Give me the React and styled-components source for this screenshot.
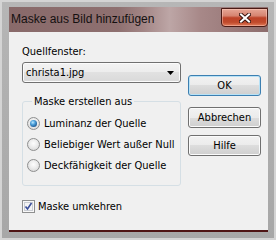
import React from 'react';
import styled, { createGlobalStyle } from 'styled-components';

const Global = createGlobalStyle`
  html, body { margin: 0; padding: 0; background: #d3d3d3; }
  body { font-family: "DejaVu Sans Condensed", "Liberation Sans", sans-serif; }
  * { box-sizing: border-box; }
`;

const Screen = styled.div`
  width: 276px;
  height: 240px;
  padding: 2px;
  background: #d4d4d4;
  display: flex;
`;

const Frame = styled.div`
  flex: 1;
  display: flex;
  flex-direction: column;
  padding: 5px 6px 6px 7px;
  background: linear-gradient(#b6b6b6, #a7a7a7);
`;

const TitleBar = styled.div`
  height: 25px;
  display: flex;
  align-items: flex-start;
  background: linear-gradient(90deg, #896a6a 0%, #8e7070 42%, #a38686 52%, #bda6a6 62%, #a78888 74%, #8d6d6d 100%);
`;

const Title = styled.span`
  flex: 1;
  padding: 5px 0 0 2px;
  font: 12px "Liberation Sans", sans-serif;
  color: #141010;
  white-space: nowrap;
`;

const CloseButton = styled.div`
  width: 47px;
  height: 19px;
  margin-top: 1px;
  border: 1px solid #4a1a14;
  border-radius: 0 0 4px 4px;
  background: linear-gradient(#e6a696 0%, #d68470 40%, #bd4228 52%, #c04a2c 78%, #e27c5a 100%);
  box-shadow: inset 0 0 0 1px rgba(255, 210, 200, 0.45);
  display: flex;
  align-items: center;
  justify-content: center;
`;

const Client = styled.div`
  flex: 1;
  background: #f0f0f0;
  border-bottom: 2px solid #4e1414;
  display: grid;
  grid-template-columns: 159px 73px;
  column-gap: 7px;
  align-items: start;
  padding: 13px 7px 0 13px;
  font-size: 11px;
  color: #000;
`;

const LeftColumn = styled.div`
  display: flex;
  flex-direction: column;
`;

const RightColumn = styled.div`
  display: flex;
  flex-direction: column;
  padding-top: 30px;
`;

const Label = styled.div`
  line-height: 13px;
  height: 13px;
`;

const Combo = styled.div`
  margin-top: 4px;
  height: 21px;
  border: 1px solid #707070;
  border-radius: 3px;
  background: linear-gradient(#f3f3f3 0%, #ececec 50%, #e1e1e1 50%, #d9d9d9 100%);
  box-shadow: inset 0 0 0 1px #fbfbfb;
  display: flex;
  align-items: center;
  padding: 0 6px 0 3px;
`;

const ComboText = styled.span`
  flex: 1;
`;

const Group = styled.fieldset`
  margin: 12px 0 0;
  padding: 9px 0 13px 4px;
  border: 1px solid #d5dfe5;
  border-radius: 3px;
  display: flex;
  flex-direction: column;
  gap: 8px;
`;

const Legend = styled.legend`
  margin-left: 5px;
  padding: 0 2px;
  line-height: 13px;
`;

const OptionRow = styled.label`
  display: flex;
  align-items: center;
  gap: 4px;
  height: 13px;
  line-height: 13px;
`;

const Radio = styled.span`
  width: 13px;
  height: 13px;
  border-radius: 50%;
  border: 1px solid #8e8f8f;
  background: radial-gradient(circle at 50% 40%, #fdfdfd 0%, #ececec 45%, #cfcfcf 100%);
  display: flex;
  align-items: center;
  justify-content: center;
  &::after {
    content: "";
    width: 7px;
    height: 7px;
    border-radius: 50%;
    display: ${(p) => (p.$checked ? 'block' : 'none')};
    background: radial-gradient(circle at 40% 35%, #bfe8ff 0%, #4da2dc 35%, #1f5a94 75%, #17365e 100%);
  }
`;

const CheckRow = styled.label`
  margin-top: 14px;
  display: flex;
  align-items: center;
  gap: 3px;
  height: 13px;
  line-height: 13px;
`;

const CheckBox = styled.span`
  width: 13px;
  height: 13px;
  border: 1px solid #8e8f8f;
  background: #f4f4f4;
  box-shadow: inset 0 0 0 1px #f8f8f8, inset 0 0 0 2px #c9ccd2;
  display: flex;
  align-items: center;
  justify-content: center;
`;

const Button = styled.button`
  margin-top: ${(p) => p.$gap || 0}px;
  height: 21px;
  width: 73px;
  padding: 0;
  font: inherit;
  color: #000;
  border: 1px solid ${(p) => (p.$default ? '#3c7fb1' : '#707070')};
  border-radius: 3px;
  background: linear-gradient(#f2f2f2 0%, #ebebeb 50%, #dddddd 50%, #cfcfcf 100%);
  box-shadow: inset 0 0 0 1px ${(p) => (p.$default ? '#b8e2f6' : '#fbfbfb')};
`;

export default function App() {
  return (
    <>
      <Global />
      <Screen>
        <Frame>
          <TitleBar>
            <Title>Maske aus Bild hinzufügen</Title>
            <CloseButton>
              <svg width="12" height="10" viewBox="0 0 12 10">
                <path d="M2 1.5 L10 8.5 M10 1.5 L2 8.5" stroke="#3a1510" strokeWidth="4" strokeLinecap="square" />
                <path d="M2 1.5 L10 8.5 M10 1.5 L2 8.5" stroke="#ffffff" strokeWidth="2" strokeLinecap="square" />
              </svg>
            </CloseButton>
          </TitleBar>
          <Client>
            <LeftColumn>
              <Label>Quellfenster:</Label>
              <Combo>
                <ComboText>christa1.jpg</ComboText>
                <svg width="7" height="4" viewBox="0 0 7 4">
                  <path d="M0 0 H7 L3.5 4 Z" fill="#000" />
                </svg>
              </Combo>
              <Group>
                <Legend>Maske erstellen aus</Legend>
                <OptionRow><Radio $checked />Luminanz der Quelle</OptionRow>
                <OptionRow><Radio />Beliebiger Wert außer Null</OptionRow>
                <OptionRow><Radio />Deckfähigkeit der Quelle</OptionRow>
              </Group>
              <CheckRow>
                <CheckBox>
                  <svg width="9" height="9" viewBox="0 0 9 9">
                    <path d="M1.5 4.5 L3.5 7 L7.5 1" stroke="#3b4f9a" strokeWidth="1.6" fill="none" />
                  </svg>
                </CheckBox>
                Maske umkehren
              </CheckRow>
            </LeftColumn>
            <RightColumn>
              <Button $default>OK</Button>
              <Button $gap={11}>Abbrechen</Button>
              <Button $gap={7}>Hilfe</Button>
            </RightColumn>
          </Client>
        </Frame>
      </Screen>
    </>
  );
}
